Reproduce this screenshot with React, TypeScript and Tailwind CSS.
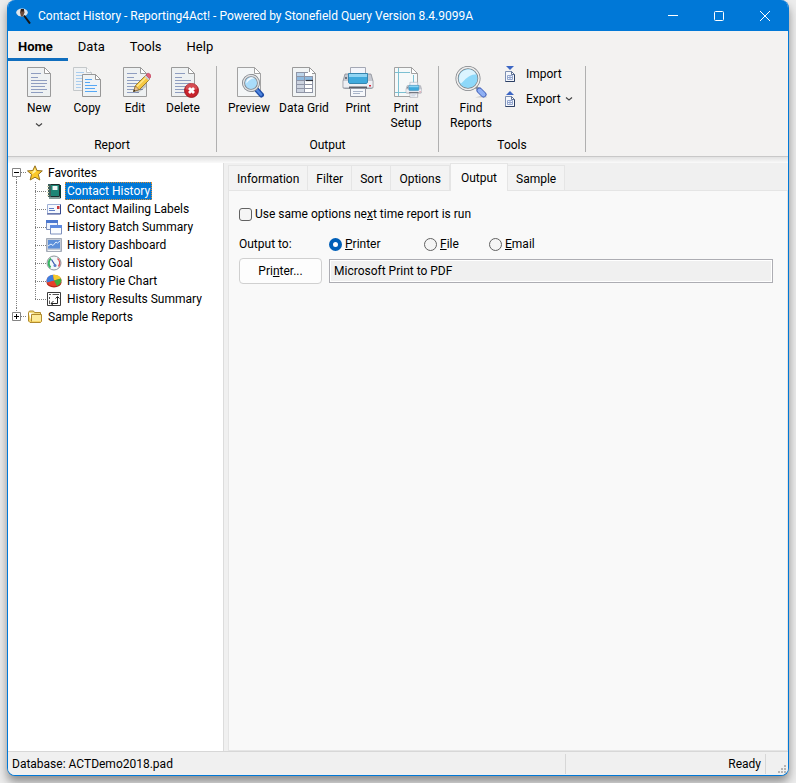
import { useState } from "react";
import type { ReactNode } from "react";

/* ---------- ribbon icons (32px) ---------- */

function PageShape({ lines = "#8e9dc0" }: { lines?: string }) {
  return (
    <>
      <path d="M4.5 1.5h17l6 6v23h-23z" fill="#eef1f2" stroke="#9a9a9a" />
      <path d="M21.5 1.5v6h6z" fill="#fff" stroke="#9a9a9a" />
      <path
        d="M8 7.5h10M8 11.5h7M8 14.5h16M8 17.5h16M8 20.5h14M8 23.5h16M8 26.5h12"
        stroke={lines}
        fill="none"
      />
    </>
  );
}

function NewIcon() {
  return (
    <svg width="32" height="32" viewBox="0 0 32 32">
      <PageShape />
    </svg>
  );
}

function CopyIcon() {
  return (
    <svg width="32" height="32" viewBox="0 0 32 32">
      <path d="M2.5 1.5h13l5 5v18h-18z" fill="#f0f2f3" stroke="#c4c8ca" />
      <path d="M15.5 1.5v5h5" fill="#fff" stroke="#c4c8ca" />
      <path d="M5 6.5h8M5 9.5h6M5 12.5h6M5 15.5h6M5 18.5h5M5 21.5h5" stroke="#a9cdef" />
      <path d="M11.5 8.5h13l5 5v17h-18z" fill="#eff3f5" stroke="#979797" />
      <path d="M24.5 8.5v5h5z" fill="#fff" stroke="#979797" />
      <path d="M14 13.5h7M14 16.5h5M14 19.5h12M14 22.5h10M14 25.5h12" stroke="#56a8f5" />
    </svg>
  );
}

function EditIcon() {
  return (
    <svg width="32" height="32" viewBox="0 0 32 32">
      <PageShape />
      <path d="M16 26l11-10v5l-8 6z" fill="#000" opacity=".18" />
      <path d="M14.5 25.5l2-6L27 9l4 4-10.5 10.5z" fill="#f5c842" stroke="#8a6a1c" strokeWidth=".8" />
      <path d="M18 20.5L28 10.5" stroke="#fde58c" strokeWidth="1.5" />
      <path d="M14.5 25.5l2-5.5 3.5 3.5z" fill="#e8c394" stroke="#7d5b30" strokeWidth=".6" />
      <path d="M14.3 25.7l.8-2.2 1.4 1.4z" fill="#222" />
      <path d="M25.5 10.5l1.8-1.8 4 4-1.8 1.8z" fill="#c9ccd2" />
      <path
        d="M27 9l1.3-1.5c1.5-1 4.5 1.5 3.5 3.5L30.5 12.5z"
        fill="#e2607a"
        stroke="#b03a52"
        strokeWidth=".6"
      />
    </svg>
  );
}

function DeleteIcon() {
  return (
    <svg width="32" height="32" viewBox="0 0 32 32">
      <PageShape />
      <circle cx="24.5" cy="24.5" r="7" fill="#c8232c" stroke="#8f1118" strokeWidth=".8" />
      <path d="M18.5 23a6 6 0 0 1 12 0c-3 1.5-9 1.5-12 0z" fill="#e0666c" opacity=".6" />
      <path d="M22 22l5 5M27 22l-5 5" stroke="#fff" strokeWidth="2.8" />
    </svg>
  );
}

function PreviewIcon() {
  return (
    <svg width="32" height="32" viewBox="0 0 32 32">
      <path d="M4.5 1.5h17l6 6v23h-23z" fill="#f4f6f7" stroke="#a2a2a2" />
      <path d="M21.5 1.5v6h6z" fill="#fff" stroke="#a2a2a2" />
      <path d="M23.5 23.5l5 5.5" stroke="#1f4ea8" strokeWidth="5" strokeLinecap="round" />
      <path d="M23.5 23.5l4.5 5" stroke="#4f86e0" strokeWidth="2.6" strokeLinecap="round" />
      <circle cx="18" cy="17" r="7.5" fill="#a9dcfb" stroke="#7d8187" strokeWidth="3" />
      <circle cx="18" cy="17" r="7.5" fill="none" stroke="#dfe1e4" strokeWidth="1.4" />
      <path d="M13.5 17.5a5 5 0 0 1 8-5c-4 0-6 2-8 5z" fill="#edf8ff" />
    </svg>
  );
}

function DataGridIcon() {
  return (
    <svg width="32" height="32" viewBox="0 0 32 32">
      <path d="M4.5 1.5h17l6 6v23h-23z" fill="#f1f4f5" stroke="#9a9a9a" />
      <path d="M21.5 1.5v6h6z" fill="#fff" stroke="#9a9a9a" />
      <path d="M8 6h16v20H8z" fill="#fff" />
      <path d="M8 6h8v8H8z" fill="#bcd4ea" />
      <path d="M8 10h16v4H8z" fill="#8db9df" />
      <path d="M8 14h8v12H8z" fill="#ccd3df" />
      <path
        d="M8.5 6v20M16.5 6v20M24.5 10v16M8 6.5h12M8 10.5h16M8 14.5h16M8 18.5h16M8 22.5h16M8 26.5h17"
        stroke="#8f95a6"
      />
      <path d="M18 14.5h7" stroke="#30343c" strokeWidth="1.2" />
    </svg>
  );
}

function PrinterShape() {
  return (
    <>
      <path d="M8.5 1.5h15v9h-15z" fill="#f3f5fb" stroke="#a4a8b4" />
      <path
        d="M3 8h26l2 7v6c0 1-.8 1.5-1.5 1.5h-27C1.5 22.5 1 22 1 21v-6z"
        fill="#c6c9d1"
        stroke="#8a8e97"
        strokeWidth=".8"
      />
      <path d="M1.5 15h29v6h-29z" fill="#eeeff3" />
      <path d="M3 11h2v2H3z" fill="#6d727c" />
      <path
        d="M6.5 7.5h19V16c0 1-.8 1.500-1.500 1.500H8c-.8 0-1.500-.6-1.500-1.500z"
        fill="#3fa9dc"
        stroke="#3586b0"
      />
      <path d="M7 8h18v3H7z" fill="#8fd4f3" />
      <path d="M7 20.5h18v2H7z" fill="#5b5f68" />
      <path d="M8.5 22.5h15v8h-15z" fill="#f6f8fb" stroke="#9296a2" />
      <path d="M11 25.5h10M11 27.5h7" stroke="#a9b5c9" />
      <path d="M27 19h2v1.5h-2z" fill="#d8263a" />
    </>
  );
}

function PrintIcon() {
  return (
    <svg width="32" height="32" viewBox="0 0 32 32">
      <PrinterShape />
    </svg>
  );
}

function PrintSetupIcon() {
  return (
    <svg width="32" height="32" viewBox="0 0 32 32">
      <path d="M4.5 1.5h17l6 6v23h-23z" fill="#f6f9f9" stroke="#a2a2a2" />
      <path d="M21.5 1.5v6h6z" fill="#fff" stroke="#a2a2a2" />
      <path d="M8.5 2v28M5 6.5h15M23.5 9v8M5 26.5h11" stroke="#7cc0d2" />
      <g transform="translate(15.5 15.5) scale(.52)">
        <PrinterShape />
      </g>
    </svg>
  );
}

function FindIcon() {
  return (
    <svg width="32" height="32" viewBox="0 0 32 32">
      <path d="M20 31.5h12l-2-3z" fill="#000" opacity=".15" />
      <path d="M21 21l2.5 2.5" stroke="#8a8f98" strokeWidth="3" />
      <path d="M24.5 24.5l4 4" stroke="#4a68bd" strokeWidth="6" strokeLinecap="round" />
      <path d="M24.5 24.5l4 4" stroke="#8fb0f4" strokeWidth="4" strokeLinecap="round" />
      <circle cx="13" cy="12.5" r="11" fill="#8ed8f9" stroke="#7d8085" strokeWidth="3" />
      <circle cx="13" cy="12.5" r="11" fill="none" stroke="#eee" strokeWidth="1.5" />
      <path d="M4 13c0-6 4.5-9.5 9-9.5 4 0 7 2 8 5-6-1-11 5-15 9-1.5-1-2-3-2-4.5z" fill="#dcf4ff" />
    </svg>
  );
}

function TransferIcon({ arrow }: { arrow: string }) {
  return (
    <svg width="16" height="18" viewBox="0 0 16 18">
      <path d={arrow} fill="#3c66c4" />
      <path d="M3.5 6.5h6l3 3v7h-9z" fill="#f4f7fc" stroke="#7d8fb2" />
      <path d="M12.5 9v7.5h-9" fill="none" stroke="#2c3f63" />
      <path d="M9.5 6.5v3h3z" fill="#fff" stroke="#5f7396" />
      <path d="M5.5 10.5h5v4h-5zM8 10.5v4M5.5 12.5h5" fill="none" stroke="#93a6cf" />
    </svg>
  );
}

function ChevronIcon() {
  return (
    <svg width="8" height="6" viewBox="0 0 8 6">
      <path d="M1 1.5l3 2.5 3-2.5" fill="none" stroke="#444" strokeWidth="1.2" />
    </svg>
  );
}

function AppIcon() {
  return (
    <svg width="16" height="16" viewBox="0 0 16 16">
      <ellipse cx="6" cy="4.5" rx="5.8" ry="4" fill="#dfe6ec" />
      <path d="M4.5 1.5h3.5l.5 3-1.5 4H5L4 4.5z" fill="#6b4a3a" />
      <path d="M5 1h3v2.500H5z" fill="#2a1c18" />
      <path d="M8 7.5l6 8" stroke="#151515" strokeWidth="2" />
    </svg>
  );
}

/* ---------- tree icons (16px) ---------- */

function StarIcon() {
  return (
    <svg width="16" height="16" viewBox="0 0 16 16">
      <path
        d="M8 .8l2 4.7 5.3.4-4 3.5 1.5 5.6L8 12.2l-4.8 2.8 1.3-5.600-4-3.500 5.300-.4z"
        fill="#fbc92a"
        stroke="#94701f"
      />
      <path d="M8 3l1 3.500-4 3 .8-2.800L3 6.500l3.500-.3z" fill="#fff3a8" />
    </svg>
  );
}

function BookIcon() {
  return (
    <svg width="16" height="16" viewBox="0 0 16 16">
      <path d="M2.5 1.5h11v12h-11z" fill="#1d8576" stroke="#1b2b2b" />
      <path d="M2 1h3v13H2z" fill="#3f5f5b" />
      <path d="M1 3.5h2M1 6.5h2M1 9.5h2M1 12.5h2" stroke="#d8d8b8" />
      <path d="M6.5 3h5v4h-5z" fill="#eef6f4" />
      <path d="M14.5 2v13H3" stroke="#0b3a35" fill="none" />
    </svg>
  );
}

function LetterIcon() {
  return (
    <svg width="16" height="16" viewBox="0 0 16 16">
      <path d="M1.5 3.5h13v9h-13z" fill="#f6f9fe" stroke="#9fb0d6" />
      <path d="M14.5 3.5v9.5H1" fill="none" stroke="#36478c" />
      <path d="M3 7.5h5M3 9.5h6" stroke="#5f7ec4" />
      <path d="M11 5h2.5v3H11z" fill="#c93a3a" />
    </svg>
  );
}

function WindowsIcon() {
  return (
    <svg width="16" height="16" viewBox="0 0 16 16">
      <path d="M.5 1.5h11v9H.5z" fill="#eef3fc" stroke="#7d90bd" />
      <path d="M0 1h12v3H0z" fill="#4b78d0" />
      <path d="M4.5 6.5h11v8.5h-11z" fill="#fafcff" stroke="#7d90bd" />
      <path d="M4 6h12v3H4z" fill="#5d8ae0" />
    </svg>
  );
}

function DashboardIcon() {
  return (
    <svg width="16" height="16" viewBox="0 0 16 16">
      <path d="M.5 1.5h15v13H.5z" fill="#c4cbd6" stroke="#a4abb7" />
      <path d="M2 3h12v8.5H2z" fill="#5c8fd9" />
      <path d="M2 9l3-2 2 1.5L10 5l1.5 1L14 4" fill="none" stroke="#e3f0ff" />
      <path d="M2 13.5h12" stroke="#f5f6f8" />
    </svg>
  );
}

function GaugeIcon() {
  return (
    <svg width="16" height="16" viewBox="0 0 16 16">
      <circle cx="8" cy="8" r="7" fill="#f2f7f9" stroke="#8b9298" />
      <path d="M4.5 12.5A6 6 0 0 1 5 3.5" fill="none" stroke="#35b560" strokeWidth="2" />
      <path d="M11.5 3.5a6 6 0 0 1 1 8" fill="none" stroke="#e0525a" strokeWidth="1.5" />
      <path d="M5.5 4.5L9.5 11" stroke="#3553a8" strokeWidth="1.2" />
      <circle cx="9" cy="10.5" r="1.5" fill="#5b7bc8" />
    </svg>
  );
}

function PieIcon() {
  return (
    <svg width="16" height="16" viewBox="0 0 16 16">
      <ellipse cx="8" cy="9.5" rx="7.5" ry="5" fill="#b52a1c" />
      <ellipse cx="8" cy="7.5" rx="7.5" ry="5.8" fill="#e8402a" />
      <path d="M8 7.5L1 9.5C-.5 5 3 2 7 1.7z" fill="#3f7fe0" />
      <path d="M8 7.5L7 1.7c4-.3 7 1 8 3.8z" fill="#f3cc2e" />
      <path d="M8 7.5l7-2c1.5 3.5-1 6.5-4 7.5z" fill="#3fae3e" />
    </svg>
  );
}

function CrosstabIcon() {
  return (
    <svg width="16" height="16" viewBox="0 0 16 16">
      <path d="M1.5 1.5h13v13h-13z" fill="#fff" stroke="#3c3c3c" />
      <path d="M3 3.5h2M6.5 3.5h6.5M3.5 6v2M3.5 9.5v3.5" stroke="#555" />
      <path d="M5 12.5h6.5V6M9.500 7.500l2-2 2 2M7.500 10l-2.500 2.500 2.500 2" fill="none" stroke="#222" />
    </svg>
  );
}

function FolderIcon() {
  return (
    <svg width="16" height="16" viewBox="0 0 16 16">
      <path d="M1.5 3.5l1-1.5h4l1 1.5h6v3" fill="#f4dc7c" stroke="#b08a2e" />
      <path d="M1.5 3.5v8.5l1.5 1.5h10.5l1-1v-7H4.5v7" fill="#f7d667" stroke="#b08a2e" />
      <path d="M5 6h9v6H5z" fill="#fdeb9c" />
    </svg>
  );
}

/* ---------- ribbon ---------- */

function RibbonButton({
  icon,
  label,
  width = "w-12",
  menu = false,
}: {
  icon: ReactNode;
  label: string;
  width?: string;
  menu?: boolean;
}) {
  return (
    <button type="button" className={`${width} flex flex-col items-center hover:bg-[#e4e2e0]`}>
      {icon}
      <span className="mt-[3px] text-center leading-[15px]">{label}</span>
      {menu && (
        <span className="mt-1.5">
          <ChevronIcon />
        </span>
      )}
    </button>
  );
}

function RibbonGroup({ title, width, children }: { title: string; width: string; children: ReactNode }) {
  return (
    <section className={`${width} flex h-[86px] flex-col justify-between border-r border-[#b0b0b0]`}>
      <div className="flex items-start pl-[7px]">{children}</div>
      <h2 className="text-center leading-[13px]">{title}</h2>
    </section>
  );
}

function Ribbon() {
  const [active, setActive] = useState("Home");
  return (
    <header className="border-b border-[#c8c8c8] bg-[#f3f2f1]">
      <nav className="flex h-[30px] text-[13px]">
        {["Home", "Data", "Tools", "Help"].map((tab) => (
          <button
            key={tab}
            type="button"
            onClick={() => setActive(tab)}
            className={`border-b-3 pt-1 pr-[15px] pl-2.5 ${
              active === tab ? "border-[#106ebe] font-bold" : "border-transparent"
            }`}
          >
            {tab}
          </button>
        ))}
      </nav>
      <div className="flex pt-[5px] pb-1">
        <RibbonGroup title="Report" width="w-[209px]">
          <RibbonButton icon={<NewIcon />} label="New" menu />
          <RibbonButton icon={<CopyIcon />} label="Copy" />
          <RibbonButton icon={<EditIcon />} label="Edit" />
          <RibbonButton icon={<DeleteIcon />} label="Delete" />
        </RibbonGroup>
        <RibbonGroup title="Output" width="w-[222px]">
          <RibbonButton icon={<PreviewIcon />} label="Preview" width="w-[50px]" />
          <RibbonButton icon={<DataGridIcon />} label="Data Grid" width="w-[60px]" />
          <RibbonButton icon={<PrintIcon />} label="Print" />
          <RibbonButton icon={<PrintSetupIcon />} label="Print Setup" />
        </RibbonGroup>
        <RibbonGroup title="Tools" width="w-[147px]">
          <RibbonButton icon={<FindIcon />} label="Find Reports" width="w-[50px]" />
          <div className="ml-1.5 flex flex-col gap-[9px]">
            <button type="button" className="flex h-4 items-center gap-2">
              <TransferIcon arrow="M4 1h8L8 5z" />
              Import
            </button>
            <button type="button" className="flex h-4 items-center gap-2">
              <TransferIcon arrow="M4 5h8L8 1z" />
              <span className="flex items-center gap-1">
                Export <ChevronIcon />
              </span>
            </button>
          </div>
        </RibbonGroup>
      </div>
    </header>
  );
}

/* ---------- report tree ---------- */

const favorites = [
  { name: "Contact History", icon: <BookIcon /> },
  { name: "Contact Mailing Labels", icon: <LetterIcon /> },
  { name: "History Batch Summary", icon: <WindowsIcon /> },
  { name: "History Dashboard", icon: <DashboardIcon /> },
  { name: "History Goal", icon: <GaugeIcon /> },
  { name: "History Pie Chart", icon: <PieIcon /> },
  { name: "History Results Summary", icon: <CrosstabIcon /> },
];

function Expander({ open, line }: { open: boolean; line: string }) {
  return (
    <svg width="15" height="18" viewBox="0 0 15 18">
      <path d={line} stroke="#808080" strokeDasharray="1 1" fill="none" />
      <path d="M.5 4.5h8v8h-8z" fill="#fff" stroke="#848484" />
      <path d={open ? "M2 8.5h5" : "M2 8.5h5M4.5 6v5"} stroke="#000" />
    </svg>
  );
}

function Branch({ last }: { last: boolean }) {
  return (
    <svg width="11" height="18" viewBox="0 0 11 18">
      <path
        d={last ? "M.5 0v9M0 9.5h11" : "M.5 0v18M0 9.5h11"}
        stroke="#808080"
        strokeDasharray="1 1"
        fill="none"
      />
    </svg>
  );
}

function ReportTree() {
  const [open, setOpen] = useState(true);
  const [selected, setSelected] = useState("Contact History");
  return (
    <aside className="w-[216px] shrink-0 border-r border-[#dcdcdc] bg-white pt-px pl-1">
      <button type="button" onClick={() => setOpen(!open)} className="flex h-[18px] items-center">
        <Expander open={open} line="M4.5 13v5M9 8.5h6" />
        <StarIcon />
        <span className="ml-[5px]">Favorites</span>
      </button>
      {open && (
        <ul className="ml-1 border-l border-dotted border-[#808080] pl-[18px]">
          {favorites.map((report, i) => (
            <li key={report.name}>
              <button
                type="button"
                onClick={() => setSelected(report.name)}
                className="flex h-[18px] items-center"
              >
                <Branch last={i === favorites.length - 1} />
                {report.icon}
                <span
                  className={`ml-[3px] border border-dotted px-px leading-4 whitespace-nowrap ${
                    selected === report.name
                      ? "border-[#e08a2b] bg-[#0078d7] text-white"
                      : "border-transparent"
                  }`}
                >
                  {report.name}
                </span>
              </button>
            </li>
          ))}
        </ul>
      )}
      <button type="button" className="flex h-[18px] items-center">
        <Expander open={false} line="M4.5 0v5M9 8.5h6" />
        <FolderIcon />
        <span className="ml-[5px]">Sample Reports</span>
      </button>
    </aside>
  );
}

/* ---------- report options ---------- */

const tabs = ["Information", "Filter", "Sort", "Options", "Output", "Sample"];

const outputs = [
  { key: "P", rest: "rinter", width: "w-[95px]" },
  { key: "F", rest: "ile", width: "w-[65px]" },
  { key: "E", rest: "mail", width: "w-[65px]" },
];

function OutputPage() {
  const [target, setTarget] = useState("P");
  return (
    <form className="flex flex-1 flex-col border border-t-0 border-[#e5e5e5] bg-[#f9f9f9] pt-[15px] pr-[14px] pl-2.5">
      <label className="flex h-4 items-center gap-[3px]">
        <input
          type="checkbox"
          className="size-[13px] appearance-none rounded-[3px] border border-[#626262] bg-[#f5f5f5] checked:bg-[#005fb8]"
        />
        <span>
          Use same options ne<u>x</u>t time report is run
        </span>
      </label>
      <fieldset className="mt-[14px] flex h-4 items-center">
        <legend className="float-left w-[90px]">Output to:</legend>
        {outputs.map((o) => (
          <label key={o.key} className={`${o.width} flex items-center gap-[3px]`}>
            <input
              type="radio"
              name="output"
              checked={target === o.key}
              onChange={() => setTarget(o.key)}
              className="size-[13px] appearance-none rounded-full border border-[#626262] bg-[#f5f5f5] checked:border-4 checked:border-[#005fb8] checked:bg-white"
            />
            <span>
              <u>{o.key}</u>
              {o.rest}
            </span>
          </label>
        ))}
      </fieldset>
      <div className="mt-1.5 flex items-center gap-[7px]">
        <button
          type="button"
          className="h-[26px] w-[83px] shrink-0 rounded border border-[#d0d0d0] bg-[#fdfdfd]"
        >
          Pri<u>n</u>ter...
        </button>
        <input
          type="text"
          readOnly
          aria-label="Printer name"
          value="Microsoft Print to PDF"
          className="h-6 min-w-0 flex-1 border border-[#adadb3] bg-[#f0f0f0] px-1 inset-ring inset-ring-white outline-none"
        />
      </div>
    </form>
  );
}

function ReportPanel() {
  const [active, setActive] = useState("Output");
  return (
    <main className="ml-1 flex min-w-0 flex-1 flex-col">
      <div className="flex h-7 items-end">
        {tabs.map((tab) => (
          <button
            key={tab}
            type="button"
            onClick={() => setActive(tab)}
            className={
              active === tab
                ? "h-7 border border-b-0 border-[#e5e5e5] bg-[#f9f9f9] px-2.5"
                : "h-[26px] border border-l-0 border-[#e5e5e5] bg-[#f3f3f3] px-2 pt-0.5 first:border-l"
            }
          >
            {tab}
          </button>
        ))}
        <div className="flex-1 self-stretch border-b border-[#e5e5e5]" />
      </div>
      <OutputPage />
    </main>
  );
}

/* ---------- window ---------- */

function TitleBar() {
  return (
    <div className="flex h-[31px] shrink-0 items-center bg-[#0078d7] pl-2 text-white">
      <AppIcon />
      <h1 className="ml-1.5 flex-1 truncate">
        Contact History - Reporting4Act! - Powered by Stonefield Query Version 8.4.9099A
      </h1>
      <button type="button" aria-label="Minimize" className="flex h-full w-[46px] items-center justify-center">
        <svg width="10" height="10" viewBox="0 0 10 10">
          <path d="M0 4.5h10" stroke="#fff" />
        </svg>
      </button>
      <button type="button" aria-label="Maximize" className="flex h-full w-[46px] items-center justify-center">
        <svg width="10" height="10" viewBox="0 0 10 10">
          <rect x=".5" y=".5" width="9" height="9" rx="1" fill="none" stroke="#fff" />
        </svg>
      </button>
      <button type="button" aria-label="Close" className="flex h-full w-[46px] items-center justify-center">
        <svg width="10" height="10" viewBox="0 0 10 10">
          <path d="M0 0l10 10M10 0L0 10" stroke="#fff" />
        </svg>
      </button>
    </div>
  );
}

function StatusBar() {
  return (
    <footer className="flex h-6 shrink-0 items-center border-t border-[#d7d7d7] bg-[#f0f0f0]">
      <span className="flex-1 pl-1">Database: ACTDemo2018.pad</span>
      <span className="w-[201px] border-x border-[#d7d7d7] pr-1 text-right leading-5">Ready</span>
      <span className="flex h-full w-[22px] items-end justify-end p-0.5">
        <svg width="8" height="8" viewBox="0 0 8 8" fill="#b5b5b5">
          <path d="M6 0h2v2H6zM3 3h2v2H3zM6 3h2v2H6zM0 6h2v2H0zM3 6h2v2H3zM6 6h2v2H6z" />
        </svg>
      </span>
    </footer>
  );
}

export default function App() {
  return (
    <div className="flex h-screen overflow-hidden bg-[#ececec] px-[7px] pb-[7px] font-[Roboto,sans-serif] text-xs text-black">
      <div className="flex min-w-0 flex-1 flex-col overflow-hidden rounded-lg border border-t-0 border-[#0078d7] bg-[#f0f0f0] shadow-[0_6px_10px_rgba(0,0,0,0.4)]">
        <TitleBar />
        <Ribbon />
        <div className="h-1.5 shrink-0 bg-linear-to-b from-[#e2e2e2] to-[#fafafa]" />
        <div className="flex min-h-0 flex-1">
          <ReportTree />
          <ReportPanel />
        </div>
        <StatusBar />
      </div>
    </div>
  );
}
